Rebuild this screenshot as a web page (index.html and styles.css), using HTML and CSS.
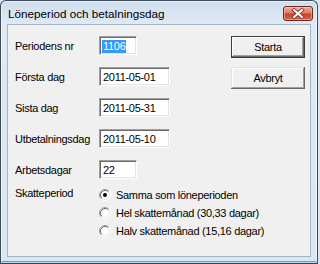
FILE: index.html
```html
<!DOCTYPE html>
<html lang="sv">
<head>
<meta charset="utf-8">
<title>Löneperiod och betalningsdag</title>
<link rel="stylesheet" href="styles.css">
</head>
<body>
<div class="window">
  <div class="titlebar">
    <span class="title">Löneperiod och betalningsdag</span>
    <span class="close" title="Stäng">
      <svg width="28" height="13" viewBox="0 0 28 13" aria-hidden="true">
        <path d="M10 3 L18 10 M18 3 L10 10" stroke="#7a2f24" stroke-width="3.6" stroke-linecap="square" fill="none"/>
        <path d="M10 3 L18 10 M18 3 L10 10" stroke="#ffffff" stroke-width="2" stroke-linecap="square" fill="none"/>
      </svg>
    </span>
  </div>
  <div class="client">
    <div class="form">
      <div class="fields">
        <div class="row"><span class="label">Periodens nr</span><span class="edit short"><span class="sel">1106</span></span></div>
        <div class="row"><span class="label">Första dag</span><span class="edit">2011-05-01</span></div>
        <div class="row"><span class="label">Sista dag</span><span class="edit">2011-05-31</span></div>
        <div class="row"><span class="label">Utbetalningsdag</span><span class="edit">2011-05-10</span></div>
        <div class="row"><span class="label">Arbetsdagar</span><span class="edit short">22</span></div>
      </div>
      <div class="tax">
        <span class="label tax-label">Skatteperiod</span>
        <div class="radios">
          <div class="radio">
            <svg class="radio-icon" width="12" height="12" viewBox="0 0 12 12" aria-hidden="true">
              <circle cx="6" cy="6" r="5" fill="#fff"/>
              <path d="M2.11 9.89 A5.5 5.5 0 0 1 9.89 2.11" stroke="#a0a0a0" fill="none"/>
              <path d="M2.82 9.18 A4.5 4.5 0 0 1 9.18 2.82" stroke="#696969" fill="none"/>
              <path d="M2.11 9.89 A5.5 5.5 0 0 0 9.89 2.11" stroke="#ffffff" fill="none"/>
              <path d="M2.82 9.18 A4.5 4.5 0 0 0 9.18 2.82" stroke="#e3e3e3" fill="none"/>
              <circle cx="6" cy="6" r="2" fill="#000"/>
            </svg>
            <span>Samma som löneperioden</span>
          </div>
          <div class="radio">
            <svg class="radio-icon" width="12" height="12" viewBox="0 0 12 12" aria-hidden="true">
              <circle cx="6" cy="6" r="5" fill="#fff"/>
              <path d="M2.11 9.89 A5.5 5.5 0 0 1 9.89 2.11" stroke="#a0a0a0" fill="none"/>
              <path d="M2.82 9.18 A4.5 4.5 0 0 1 9.18 2.82" stroke="#696969" fill="none"/>
              <path d="M2.11 9.89 A5.5 5.5 0 0 0 9.89 2.11" stroke="#ffffff" fill="none"/>
              <path d="M2.82 9.18 A4.5 4.5 0 0 0 9.18 2.82" stroke="#e3e3e3" fill="none"/>
            </svg>
            <span>Hel skattemånad (30,33 dagar)</span>
          </div>
          <div class="radio">
            <svg class="radio-icon" width="12" height="12" viewBox="0 0 12 12" aria-hidden="true">
              <circle cx="6" cy="6" r="5" fill="#fff"/>
              <path d="M2.11 9.89 A5.5 5.5 0 0 1 9.89 2.11" stroke="#a0a0a0" fill="none"/>
              <path d="M2.82 9.18 A4.5 4.5 0 0 1 9.18 2.82" stroke="#696969" fill="none"/>
              <path d="M2.11 9.89 A5.5 5.5 0 0 0 9.89 2.11" stroke="#ffffff" fill="none"/>
              <path d="M2.82 9.18 A4.5 4.5 0 0 0 9.18 2.82" stroke="#e3e3e3" fill="none"/>
            </svg>
            <span>Halv skattemånad (15,16 dagar)</span>
          </div>
        </div>
      </div>
    </div>
    <div class="buttons">
      <button class="btn default" type="button">Starta</button>
      <button class="btn" type="button">Avbryt</button>
    </div>
  </div>
</div>
</body>
</html>
```
FILE: styles.css
```css
html, body {
  margin: 0;
  padding: 0;
  background: #dbe6f2;
}

.window {
  width: 318px;
  height: 264px;
  box-sizing: border-box;
  border: 1px solid #3d4b5d;
  border-bottom-color: #2c4658;
  border-radius: 6px 6px 0 0;
  background: linear-gradient(to bottom, #d0deee 0px, #dfe8f3 22px, #dce6f1 100%);
  box-shadow: inset 0 0 0 1px rgba(255, 255, 255, 0.55), inset 0 -2px 0 #6e9fc6;
  padding: 0 6px 6px 6px;
  display: flex;
  flex-direction: column;
  font-family: "Liberation Sans", Arial, sans-serif;
  color: #000;
  overflow: hidden;
}

.titlebar {
  height: 23px;
  flex: none;
  display: flex;
  justify-content: space-between;
  align-items: flex-start;
  padding-left: 1px;
  margin-right: -2px;
}

.title {
  font-size: 11.7px;
  line-height: 14px;
  margin-top: 6px;
  color: #000;
}

.close {
  width: 30px;
  height: 15px;
  box-sizing: border-box;
  margin-top: 5px;
  border: 1px solid #6e2a20;
  border-radius: 3px;
  background: linear-gradient(to bottom, #eab0a3 0%, #dc7b66 45%, #c8432c 55%, #d06a4f 100%);
  box-shadow: inset 0 0 0 1px rgba(255, 220, 210, 0.45);
  display: flex;
}

.close svg {
  display: block;
}

.client {
  flex: 1;
  min-height: 0;
  background: #f0f0f0;
  border: 1px solid #a3b4c7;
  display: flex;
  padding: 11px 5px 0 7px;
  font-size: 11px;
  letter-spacing: -0.3px;
}

.form {
  flex: 1;
  min-width: 0;
  display: flex;
  flex-direction: column;
}

.fields {
  display: flex;
  flex-direction: column;
  gap: 12px;
}

.row {
  height: 19px;
  display: flex;
  align-items: center;
}

.label {
  width: 84px;
  flex: none;
  line-height: 14px;
  white-space: nowrap;
}

.edit {
  width: 71px;
  height: 19px;
  flex: none;
  box-sizing: border-box;
  background: #fff;
  border-top: 1px solid #a0a0a0;
  border-left: 1px solid #a0a0a0;
  border-right: 1px solid #ffffff;
  border-bottom: 1px solid #ffffff;
  box-shadow: inset 1px 1px 0 #696969, inset -1px -1px 0 #e3e3e3;
  padding: 2px 0 0 3px;
  line-height: 15px;
  white-space: nowrap;
}

.edit.short {
  width: 38px;
}

.sel {
  display: inline-block;
  background: #3399ff;
  color: #fff;
  line-height: 13px;
  height: 13px;
  margin-left: -1px;
  padding: 0 1px 0 1px;
  vertical-align: top;
  margin-top: 1px;
}

.tax {
  margin-top: 7px;
  display: flex;
  align-items: flex-start;
}

.tax-label {
  line-height: 14px;
}

.radios {
  display: flex;
  flex-direction: column;
}

.radio {
  height: 18px;
  display: flex;
  align-items: center;
  gap: 5px;
  white-space: nowrap;
}

.radio-icon {
  display: block;
  flex: none;
}

.buttons {
  width: 74px;
  flex: none;
  display: flex;
  flex-direction: column;
  gap: 9px;
}

.btn {
  width: 74px;
  height: 22px;
  margin: 0;
  padding: 0;
  font-family: "Liberation Sans", Arial, sans-serif;
  font-size: 11px;
  letter-spacing: -0.3px;
  color: #000;
  background: #f0f0f0;
  border: none;
  box-shadow: inset -1px -1px 0 #696969, inset 1px 1px 0 #e3e3e3,
              inset -2px -2px 0 #a0a0a0, inset 2px 2px 0 #ffffff;
}

.btn.default {
  box-shadow: inset 0 0 0 1px #3c3c3c,
              inset -2px -2px 0 #696969, inset 2px 2px 0 #ffffff,
              inset -3px -3px 0 #a0a0a0, inset 3px 3px 0 #f0f0f0;
}
```
